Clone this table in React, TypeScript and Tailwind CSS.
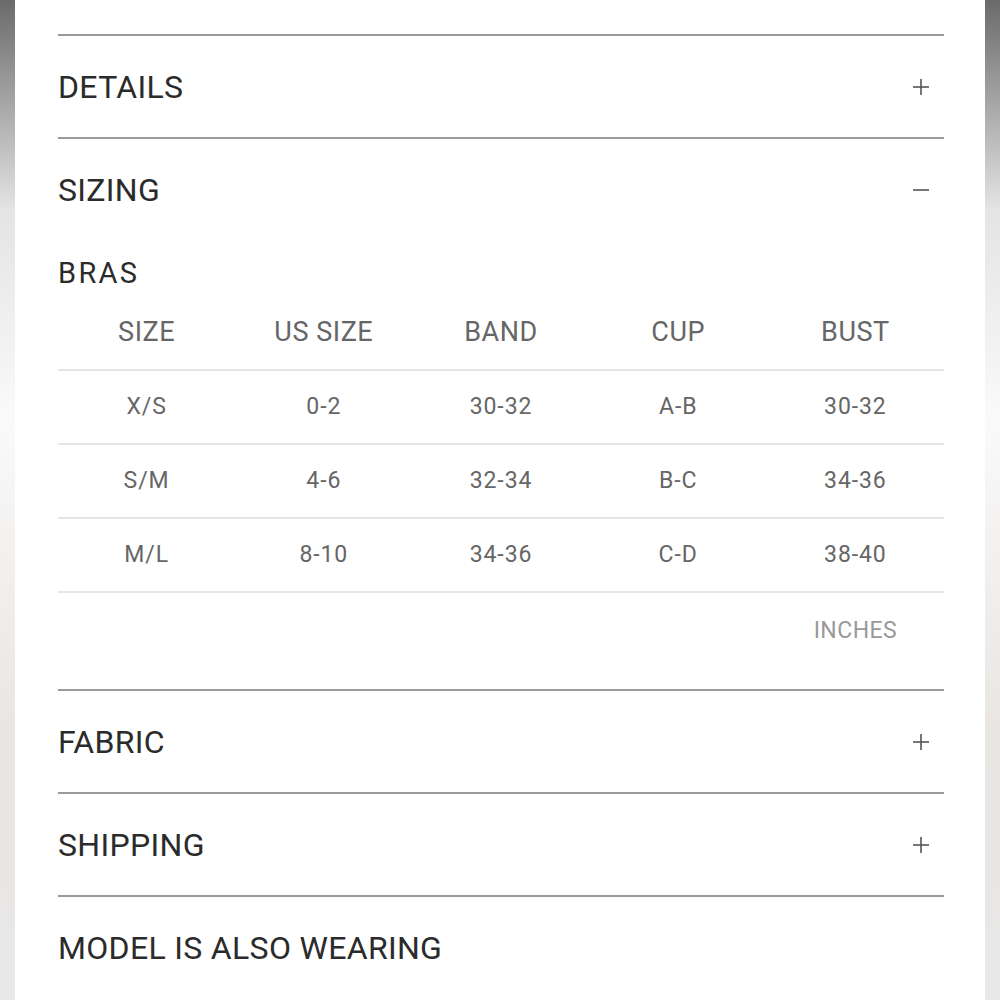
const font = { fontFamily: "Roboto, 'Noto Sans', sans-serif" };

const columns = ["SIZE", "US SIZE", "BAND", "CUP", "BUST"];

const rows = [
  ["X/S", "0-2", "30-32", "A-B", "30-32"],
  ["S/M", "4-6", "32-34", "B-C", "34-36"],
  ["M/L", "8-10", "34-36", "C-D", "38-40"],
];

function Toggle({ open }: { open?: boolean }) {
  return (
    <svg width="18" height="18" viewBox="0 0 18 18" className="mr-[14px]">
      <path d="M1 9h16" stroke="#555" strokeWidth="1.6" />
      {!open && <path d="M9 1v16" stroke="#555" strokeWidth="1.6" />}
    </svg>
  );
}

function SectionHeader({ title, open, toggle = true }: { title: string; open?: boolean; toggle?: boolean }) {
  return (
    <div className="flex h-[101px] items-center justify-between">
      <span className="text-[32px] leading-none tracking-[0.01em] text-[#2b2b2b]">{title}</span>
      {toggle && <Toggle open={open} />}
    </div>
  );
}

function Side() {
  return (
    <div className="w-[15px] shrink-0 bg-[linear-gradient(to_bottom,#6a6a6a_0px,#a4a4a4_100px,#e4e4e4_210px,#fafafa_420px,#e9e6e3_720px,#e8e8e8_1000px)]" />
  );
}

export default function App() {
  return (
    <div className="flex h-[1000px] w-[1000px] overflow-hidden bg-white" style={font}>
      <Side />
      <main className="flex-1 pl-[43px] pr-[41px] pt-[34px]">
        <div className="border-t-2 border-[#9a9a9a]">
          <SectionHeader title="DETAILS" />
        </div>
        <div className="border-t-2 border-[#9a9a9a]">
          <SectionHeader title="SIZING" open />
          <div className="mt-[13px] text-[29px] leading-[40px] tracking-[0.08em] text-[#2b2b2b]">BRAS</div>
          <div className="grid h-[78px] grid-cols-5 items-center border-b-2 border-[#e6e6e6] pt-[2px] text-center text-[27px] tracking-[0.02em] text-[#666]">
            {columns.map((c) => (
              <span key={c}>{c}</span>
            ))}
          </div>
          {rows.map((r) => (
            <div
              key={r[0]}
              className="grid h-[74px] grid-cols-5 items-center border-b-2 border-[#e6e6e6] text-center text-[23px] tracking-[0.04em] text-[#666]"
            >
              {r.map((v, i) => (
                <span key={i}>{v}</span>
              ))}
            </div>
          ))}
          <div className="grid h-[96px] grid-cols-5 items-start pt-[21px] text-center text-[23px] tracking-[0.02em] text-[#999]">
            <span className="col-start-5">INCHES</span>
          </div>
        </div>
        <div className="border-t-2 border-[#9a9a9a]">
          <SectionHeader title="FABRIC" />
        </div>
        <div className="border-t-2 border-[#9a9a9a]">
          <SectionHeader title="SHIPPING" />
        </div>
        <div className="border-t-2 border-[#9a9a9a]">
          <SectionHeader title="MODEL IS ALSO WEARING" toggle={false} />
        </div>
      </main>
      <Side />
    </div>
  );
}
